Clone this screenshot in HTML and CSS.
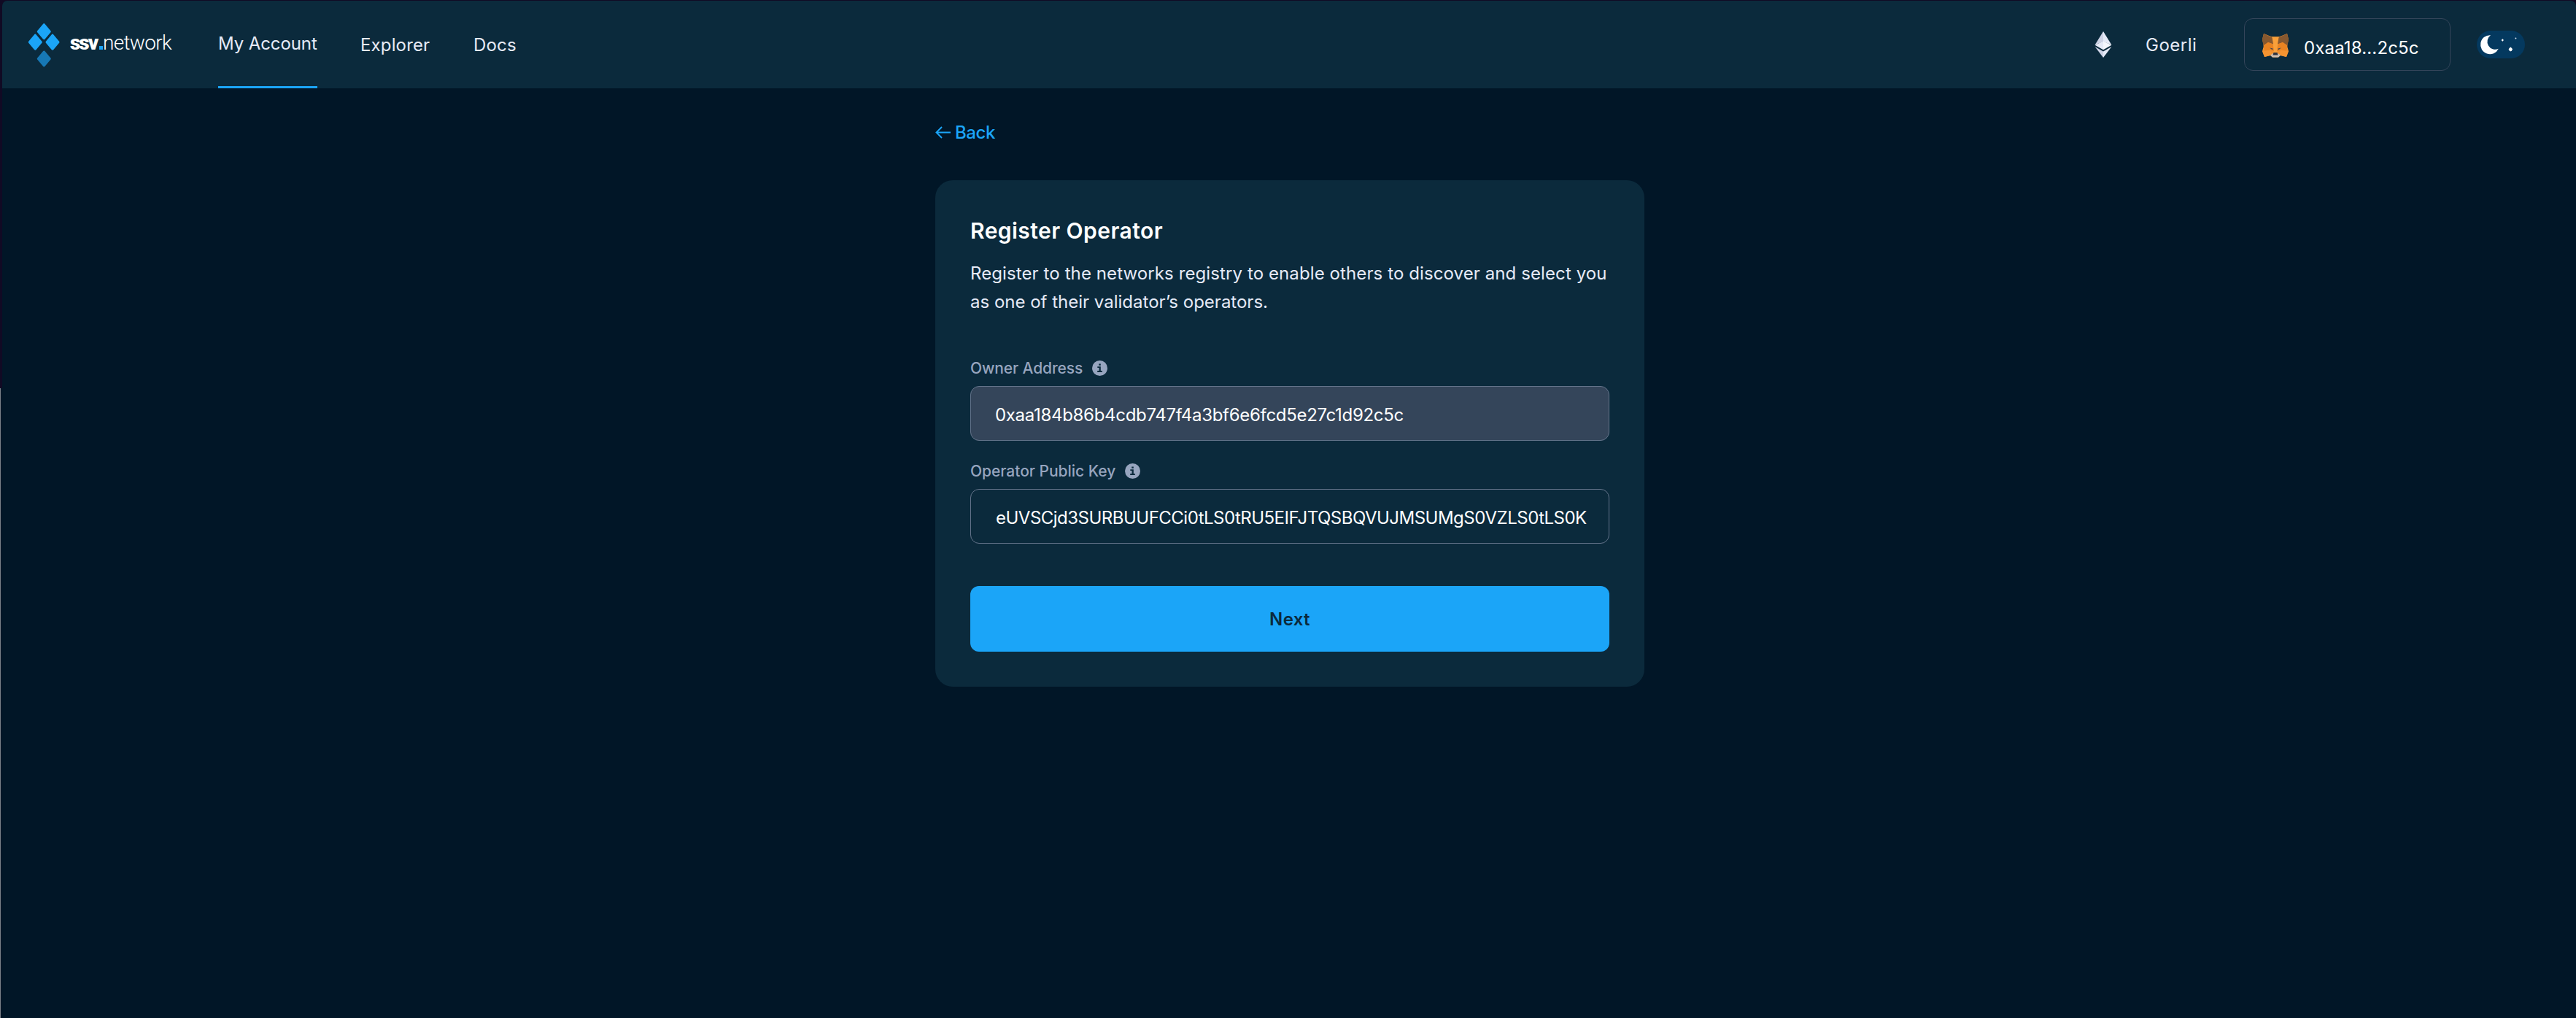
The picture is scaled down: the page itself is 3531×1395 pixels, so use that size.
FILE: index.html
```html
<!DOCTYPE html>
<html lang="en">
<head>
<meta charset="utf-8">
<title>Register Operator</title>
<link rel="stylesheet" href="styles.css">
</head>
<body>
<div class="window">
  <header class="header">
    <a class="logo">
      <svg class="logo-mark" width="44" height="62" viewBox="0 0 44 62" fill="#1ba5f8" stroke="#1ba5f8" stroke-width="3" stroke-linejoin="round">
        <path d="M21.300 2.700 29.300 12.200 21.300 21.700 13.300 12.200Z"/>
        <path d="M9.300 17.200 17.300 26.700 9.300 36.200 1.300 26.700Z"/>
        <path d="M33 17.200 41 26.700 33 36.200 25 26.700Z"/>
        <path d="M21.300 40 29.300 49.500 21.300 59 13.300 49.500Z" fill="#1778b5" stroke="#1778b5"/>
      </svg>
      <span class="wordmark"><b>ssv</b><i></i><span>network</span></span>
    </a>
    <nav class="nav">
      <a class="nav-item active">My Account</a>
      <a class="nav-item explorer">Explorer</a>
      <a class="nav-item docs">Docs</a>
    </nav>
    <div class="tools">
      <svg class="eth" width="24" height="36" viewBox="0 0 24 36">
        <path d="M12 0 0.6 18.6 12 14Z" fill="#cdd2e5"/>
        <path d="M12 0 23.4 18.6 12 14Z" fill="#e6eaf7"/>
        <path d="M12 13.6 0.6 18.8 12 25.2Z" fill="#e6eaf7"/>
        <path d="M12 13.6 23.4 18.8 12 25.2Z" fill="#f5f7fd"/>
        <path d="M0.6 21 12 27.6V36Z" fill="#cdd2e5"/>
        <path d="M23.4 21 12 27.6V36Z" fill="#e6eaf7"/>
      </svg>
      <span class="network">Goerli</span>
      <div class="wallet">
        <svg class="fox" width="36" height="33" viewBox="0 0 36 33">
          <path d="M2 0 13 4.500H23L34 0 36 8 34 17 36 24 33 32 25 30 22 32.500H14L11 30 3 32 0 24 2 17 0 8Z" fill="#f0902f"/>
          <path d="M13 4.500H23L21 15 20.500 26H15.500L15 15Z" fill="#f9a03a"/>
          <path d="M2 0 13.500 5.500 15 14.500 8 12 1.500 16.500 0 8Z" fill="#87582f"/>
          <path d="M34 0 22.500 5.500 21 14.500 28 12 34.500 16.500 36 8Z" fill="#87582f"/>
          <path d="M1.500 16.500 8 12 14.500 14.500 16 24 10 22.500 3 24Z" fill="#e98322"/>
          <path d="M34.500 16.500 28 12 21.500 14.500 20 24 26 22.500 33 24Z" fill="#e98322"/>
          <path d="M0 24 10 23 13 26 11 30 3 32ZM36 24 26 23 23 26 25 30 33 32Z" fill="#f59431"/>
          <path d="M10 19.500 14.500 20.500 14 22.500ZM26 19.500 21.500 20.500 22 22.500Z" fill="#3e4653"/>
          <path d="M11 29.500 15 27H21L25 29.500 22 32.500H14Z" fill="#cdbdb1"/>
          <path d="M15.500 26H20.500L21.500 29.500H14.500Z" fill="#30343d"/>
        </svg>
        <span>0xaa18...2c5c</span>
      </div>
      <svg class="theme" width="66" height="38" viewBox="0 0 66 38">
        <rect width="66" height="38" rx="19" fill="#04395f"/>
        <path d="M19 6.200A13 13 0 1 0 29.800 24.800 10.800 10.800 0 0 1 19 6.200Z" fill="#fff"/>
        <path d="M35.300 11 36 12.300 37.300 13 36 13.700 35.300 15 34.600 13.700 33.300 13 34.600 12.300Z" fill="#fff"/>
        <circle cx="53.400" cy="10.500" r="1" fill="#dce6f0"/>
        <path d="M46.300 22.600 48 24 49 25.500 48 27.200 46.300 28.500 44.600 27.200 43.600 25.500 44.600 24Z" fill="#fff"/>
      </svg>
    </div>
  </header>

  <main class="main">
    <a class="back">
      <svg width="21" height="17" viewBox="0 0 21 17" fill="none" stroke="#1ba5f8" stroke-width="1.900"><path d="M21 8.500H1.500M9 1 1.500 8.500 9 16"/></svg>
      <span>Back</span>
    </a>
    <section class="card">
      <h1 class="title">Register Operator</h1>
      <p class="description"><span class="line">Register to the networks registry to enable others to discover and select you</span> as one of their validator’s operators.</p>
      <div class="label">
        <span>Owner Address</span>
        <svg width="21" height="21" viewBox="0 0 21 21"><circle cx="10.500" cy="10.500" r="10.500" fill="#97a5bf"/><path d="M9.200 4.600H11.800V6.700H9.200ZM7.300 8.300H11.800V14.100H13.800V15.900H7.200V14.100H9.500V10H7.300Z" fill="#0b2a3c"/></svg>
      </div>
      <div class="input disabled"><span class="address">0xaa184b86b4cdb747f4a3bf6e6fcd5e27c1d92c5c</span></div>
      <div class="label second">
        <span>Operator Public Key</span>
        <svg width="21" height="21" viewBox="0 0 21 21"><circle cx="10.500" cy="10.500" r="10.500" fill="#97a5bf"/><path d="M9.200 4.600H11.800V6.700H9.200ZM7.300 8.300H11.800V14.100H13.800V15.900H7.200V14.100H9.500V10H7.300Z" fill="#0b2a3c"/></svg>
      </div>
      <div class="input"><span class="key">eUVSCjd3SURBUUFCCi0tLS0tRU5EIFJTQSBQVUJMSUMgS0VZLS0tLS0K</span></div>
      <button class="next">Next</button>
    </section>
  </main>
</div>
</body>
</html>
```
FILE: styles.css
```css
* { box-sizing: border-box; }

body {
  margin: 0;
  height: 1395px;
  padding: 1px 0 0 3px;
  background: linear-gradient(#7b8087, #7b8087) 0 532px / 1px 863px no-repeat,
    linear-gradient(#011627, #011627) 1px 532px / 2px 863px no-repeat,
    #110a24;
  font-family: Inter, "Liberation Sans", sans-serif;
  font-size: 24px;
  color: #e6eaf7;
}

.window {
  height: 1394px;
  background: #011627;
  border-radius: 7px 7px 0 0;
  overflow: hidden;
}

.header {
  display: flex;
  height: 120px;
  background: #0b2a3c;
}

.logo {
  display: flex;
  width: 296px;
  padding: 30px 0 0 36px;
}

.wordmark {
  display: flex;
  align-items: baseline;
  height: 34px;
  margin: 11px 0 0 13px;
  font: 300 28px/34px Roboto, sans-serif;
  letter-spacing: -0.7px;
  color: #fff;
}

.wordmark b { width: 40px; font-weight: 900; letter-spacing: -2px; }
.wordmark i { width: 5px; height: 5px; background: #1ba5f8; }

.nav { display: flex; }
.nav-item { display: flex; align-items: center; height: 120px; }
.active { width: 136px; border-bottom: 3px solid #1ba5f8; letter-spacing: -0.1px; }
.explorer { margin-left: 59px; width: 95px; letter-spacing: 0.14px; }
.docs { margin-left: 60px; letter-spacing: 0.2px; }

.tools {
  display: flex;
  align-items: center;
  margin: 0 70px 0 auto;
}

.network { width: 70px; margin: 0 65px 0 46px; letter-spacing: 0.5px; }

.wallet {
  display: flex;
  align-items: center;
  width: 283px;
  height: 72px;
  margin-right: 36px;
  padding-left: 24px;
  border: 1px solid #34455a;
  border-radius: 12px;
  color: #fff;
}

.wallet span { margin-left: 21px; padding-top: 8px; letter-spacing: 0.15px; }
.fox { margin-top: 2px; }

.main { width: 972px; margin-left: 1279px; padding-top: 48px; }

.back {
  display: flex;
  align-items: center;
  gap: 5px;
  height: 24px;
  margin-bottom: 54px;
  font-weight: 500;
  letter-spacing: -0.4px;
  color: #1ba5f8;
}

.back span { padding-left: 1px; }

.card {
  height: 694px;
  padding: 48px;
  border-radius: 24px;
  background: #0b2a3c;
}

.title {
  margin: 0 0 18px;
  font-size: 30px;
  font-weight: 600;
  line-height: 42px;
  letter-spacing: 0.45px;
  color: #fff;
}

.description { margin: 0 0 61px; line-height: 39px; }
.description .line { display: block; letter-spacing: 0.1px; }

.label {
  display: flex;
  align-items: center;
  gap: 13px;
  height: 21px;
  margin-bottom: 14px;
  font-size: 21px;
  font-weight: 500;
  letter-spacing: -0.1px;
  color: #97a5bf;
}

.second { margin-top: 31px; letter-spacing: -0.02px; }

.input {
  display: flex;
  align-items: center;
  height: 75px;
  padding: 3px 33px 0;
  border: 1px solid #64748b;
  border-radius: 12px;
  color: #fff;
}

.disabled { background: #34455a; }
.address { letter-spacing: -0.31px; }
.key { letter-spacing: -0.51px; margin-left: 1px; }

.next {
  display: block;
  width: 100%;
  height: 90px;
  margin-top: 58px;
  border: 0;
  border-radius: 12px;
  background: #1ba5f8;
  font: 600 24px Inter, "Liberation Sans", sans-serif;
  letter-spacing: 0.35px;
  color: #0b2a3c;
}
```
